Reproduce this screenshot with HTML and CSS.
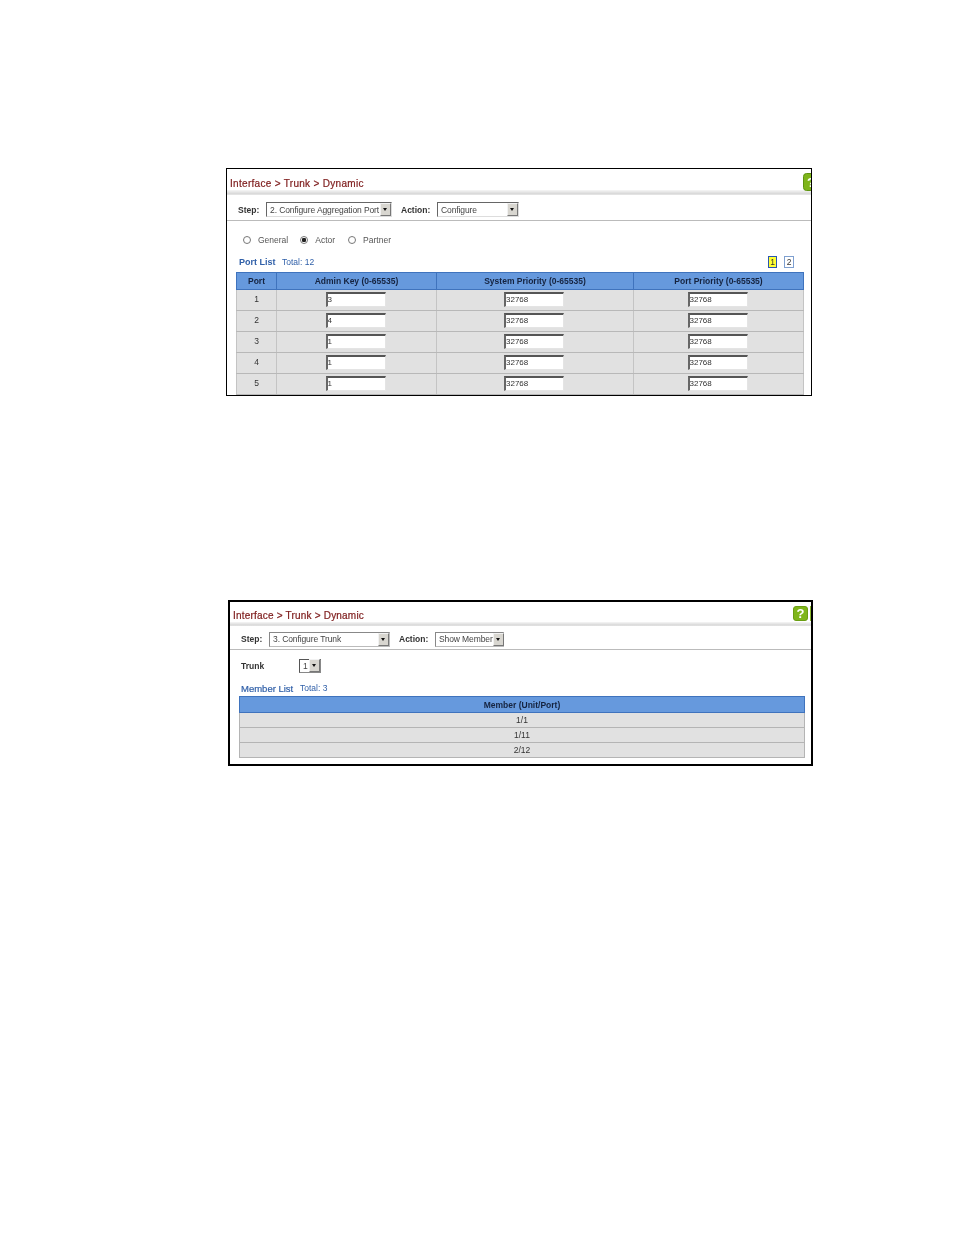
FILE: index.html
```html
<!DOCTYPE html>
<html lang="en">
<head>
<meta charset="utf-8">
<title>Interface &gt; Trunk &gt; Dynamic</title>
<link rel="stylesheet" href="styles.css">
</head>
<body>
<main class="page">
  <section class="panel panel-a">
    <header class="title-row">
      <h1 class="title">Interface &gt; Trunk &gt; Dynamic</h1>
      <span class="help"><svg viewBox="0 0 16 18" width="16" height="18"><rect x="0.5" y="0.5" width="15" height="17" rx="3" fill="#7fb51a" stroke="#5f9410"/><text x="8" y="14" text-anchor="middle" class="help-mark">?</text></svg></span>
    </header>
    <div class="band"></div>
    <div class="step-row">
      <span class="lbl lbl-step">Step:</span>
      <span class="sel sel-a1"><span class="sel-text">2. Configure Aggregation Port</span><span class="arrow"></span></span>
      <span class="lbl lbl-action">Action:</span>
      <span class="sel sel-a2"><span class="sel-text">Configure</span><span class="arrow"></span></span>
    </div>
    <div class="radios">
      <span class="radio"></span><span class="radio-label">General</span>
      <span class="radio on"></span><span class="radio-label r2">Actor</span>
      <span class="radio"></span><span class="radio-label">Partner</span>
    </div>
    <div class="list-row">
      <span class="list-name">Port List</span>
      <span class="list-total">Total: 12</span>
      <span class="pager">
        <span class="page-box current">1</span>
        <span class="page-box">2</span>
      </span>
    </div>
    <table class="grid grid-a">
      <colgroup><col class="c1"><col class="c2"><col class="c3"><col class="c4"></colgroup>
      <thead><tr><th>Port</th><th>Admin Key (0-65535)</th><th>System Priority (0-65535)</th><th>Port Priority (0-65535)</th></tr></thead>
      <tbody>
        <tr><td>1</td><td><input class="field" value="3"></td><td><input class="field" value="32768"></td><td><input class="field" value="32768"></td></tr>
        <tr><td>2</td><td><input class="field" value="4"></td><td><input class="field" value="32768"></td><td><input class="field" value="32768"></td></tr>
        <tr><td>3</td><td><input class="field" value="1"></td><td><input class="field" value="32768"></td><td><input class="field" value="32768"></td></tr>
        <tr><td>4</td><td><input class="field" value="1"></td><td><input class="field" value="32768"></td><td><input class="field" value="32768"></td></tr>
        <tr><td>5</td><td><input class="field" value="1"></td><td><input class="field" value="32768"></td><td><input class="field" value="32768"></td></tr>
      </tbody>
    </table>
  </section>

  <section class="panel panel-b">
    <header class="title-row">
      <h1 class="title">Interface &gt; Trunk &gt; Dynamic</h1>
      <span class="help"><svg viewBox="0 0 15 15" width="15" height="15"><rect x="0.5" y="0.5" width="14" height="14" rx="2.5" fill="#7fb51a" stroke="#6a9e12"/><text x="7.5" y="12" text-anchor="middle" class="help-mark">?</text></svg></span>
      <span class="help-edge"></span>
    </header>
    <div class="band"></div>
    <div class="step-row">
      <span class="lbl lbl-step">Step:</span>
      <span class="sel sel-b1"><span class="sel-text">3. Configure Trunk</span><span class="arrow"></span></span>
      <span class="lbl lbl-action">Action:</span>
      <span class="sel sel-b2"><span class="sel-text">Show Member</span><span class="arrow"></span></span>
    </div>
    <div class="trunk-row">
      <span class="lbl lbl-trunk">Trunk</span>
      <span class="sel sel-b3"><span class="sel-text">1</span><span class="arrow"></span></span>
    </div>
    <div class="list-row">
      <span class="list-name">Member List</span>
      <span class="list-total">Total: 3</span>
    </div>
    <table class="grid grid-b">
      <thead><tr><th>Member (Unit/Port)</th></tr></thead>
      <tbody>
        <tr><td>1/1</td></tr>
        <tr><td>1/11</td></tr>
        <tr><td>2/12</td></tr>
      </tbody>
    </table>
  </section>
</main>
</body>
</html>
```
FILE: styles.css
```css
* { box-sizing: border-box; }
html, body { margin: 0; padding: 0; background: #fff; }
body { font-family: "Liberation Sans", Arial, sans-serif; font-size: 8.5px; color: #333; }
.page { padding: 168px 0 0 226px; min-height: 1235px; }

.panel { position: relative; overflow: hidden; background: #fff; border: 1px solid #000; filter: blur(0.3px); }
.panel-a { width: 586px; height: 228px; }
.panel-b { width: 585px; height: 166px; margin: 204px 0 0 2px; border-width: 2px; }

.title-row { display: flex; justify-content: space-between; align-items: flex-start; height: 21px; padding: 4px 0 0 3px; }
.panel-b .title-row { height: 20px; padding: 4px 3px 0 3px; }
.panel-a .help { margin-right: -8px; }
.title { margin: 5px 0 0; font-size: 10px; line-height: 12px; font-weight: normal; color: #7d1a1a; -webkit-text-stroke: 0.2px #7d1a1a; letter-spacing: 0.3px; }
.panel-b .title { margin-top: 4px; letter-spacing: 0.2px; }
.help { display: block; line-height: 0; }
.help-mark { font: bold 13px "Liberation Sans", Arial, sans-serif; fill: #fff; }
.help-edge { position: absolute; right: 0; top: 4px; width: 1px; height: 15px; background: #8ab82e; }

.band { height: 5px; background: linear-gradient(#f6f6f6, #d6d6d6 80%, #f0f0f0); }
.panel-b .band { height: 4px; }

.step-row { display: flex; align-items: center; height: 26px; padding: 4px 0 0 11px; border-bottom: 1px solid #bbb; }
.panel-b .step-row { height: 24px; padding: 3px 0 0 11px; }
.lbl { font-weight: bold; color: #333; }
.lbl-step { width: 28px; }
.lbl-action { margin-left: 9px; width: 36px; }
.lbl-trunk { width: 58px; }

.sel { display: inline-flex; align-items: center; justify-content: space-between; height: 15px; background: #fff; border: 1px solid; border-color: #666 #ddd #ddd #666; color: #444; padding: 0 0 0 3px; white-space: nowrap; }
.panel-b .sel { border-color: #888 #bbb #bbb #888; }
.sel-text { letter-spacing: -0.1px; }
.sel-a1 { width: 126px; }
.sel-a2 { width: 82px; }
.sel-b1 { width: 121px; }
.sel-b2 { width: 69px; }
.panel-b .sel-b3 { width: 22px; height: 14px; border-color: #555 #888 #888 #555; }
.arrow { position: relative; flex: none; width: 11px; height: 13px; background: #d8d6d0; border: 1px solid; border-color: #f2f2f2 #777 #777 #f2f2f2; }
.arrow::after { content: ""; position: absolute; left: 2px; top: 4px; border: 2.5px solid transparent; border-top: 3px solid #111; border-bottom: 0; }

.radios { display: flex; align-items: center; height: 14px; margin: 12px 0 0 16px; color: #555; }
.radio { flex: none; width: 8px; height: 8px; border-radius: 50%; border: 1px solid #777; background: #fff; margin-right: 7px; }
.radio.on { background: radial-gradient(circle, #222 0 2px, #fff 2.4px); }
.radio-label { margin-right: 12px; }
.radio-label.r2 { margin-right: 13px; }

.list-row { display: flex; align-items: center; height: 14px; margin: 8px 0 0 12px; padding-right: 17px; color: #2f5fa8; }
.list-name { font-weight: bold; font-size: 9px; width: 43px; }
.list-total { font-size: 8.5px; }
.pager { display: flex; gap: 7px; margin-left: auto; }
.page-box { display: flex; align-items: center; justify-content: center; width: 10px; height: 12px; border: 1px solid #7fa0d0; color: #333; background: #fff; }
.page-box.current { width: 9px; background: #ffff33; border-color: #2a55b0; }

.grid { border-collapse: collapse; table-layout: fixed; background: #e1e1e1; }
.grid th { height: 17px; padding: 0; background: #6699dd; color: #15233f; font-weight: bold; border: 1px solid #3f73bd; text-align: center; }
.grid td { padding: 0 0 2px; text-align: center; color: #333; border: 1px solid #c4c4c4; }
.grid-a { width: 567px; margin: 3px 0 0 9px; }
.c1 { width: 40px; }
.c2 { width: 160px; }
.c3 { width: 197px; }
.c4 { width: 170px; }
.grid-a td { height: 21px; border-bottom-color: #b8b8b8; }
.grid-a td:not(:first-child) { padding-right: 2px; }
.field { display: block; width: 60px; height: 15px; margin: 0 auto; padding: 0; font: 8px "Liberation Sans", Arial, sans-serif; color: #333; background: #fff; border-style: solid; border-color: #555 #e4e4e4 #e4e4e4 #666; border-width: 2px 1px 1px 2px; }

.trunk-row { display: flex; align-items: center; height: 15px; margin: 8px 0 0 11px; }
.panel-b .list-row { margin: 8px 0 0 11px; }
.panel-b .list-name { width: 59px; font-size: 9.5px; font-weight: normal; -webkit-text-stroke: 0.2px #2f5fa8; }
.grid-b { width: 566px; margin: 1px 0 0 9px; }
.grid-b th { height: 16px; }
.grid-b td { height: 15px; padding: 0 0 1px; border-color: #b4b4b4; }
```
